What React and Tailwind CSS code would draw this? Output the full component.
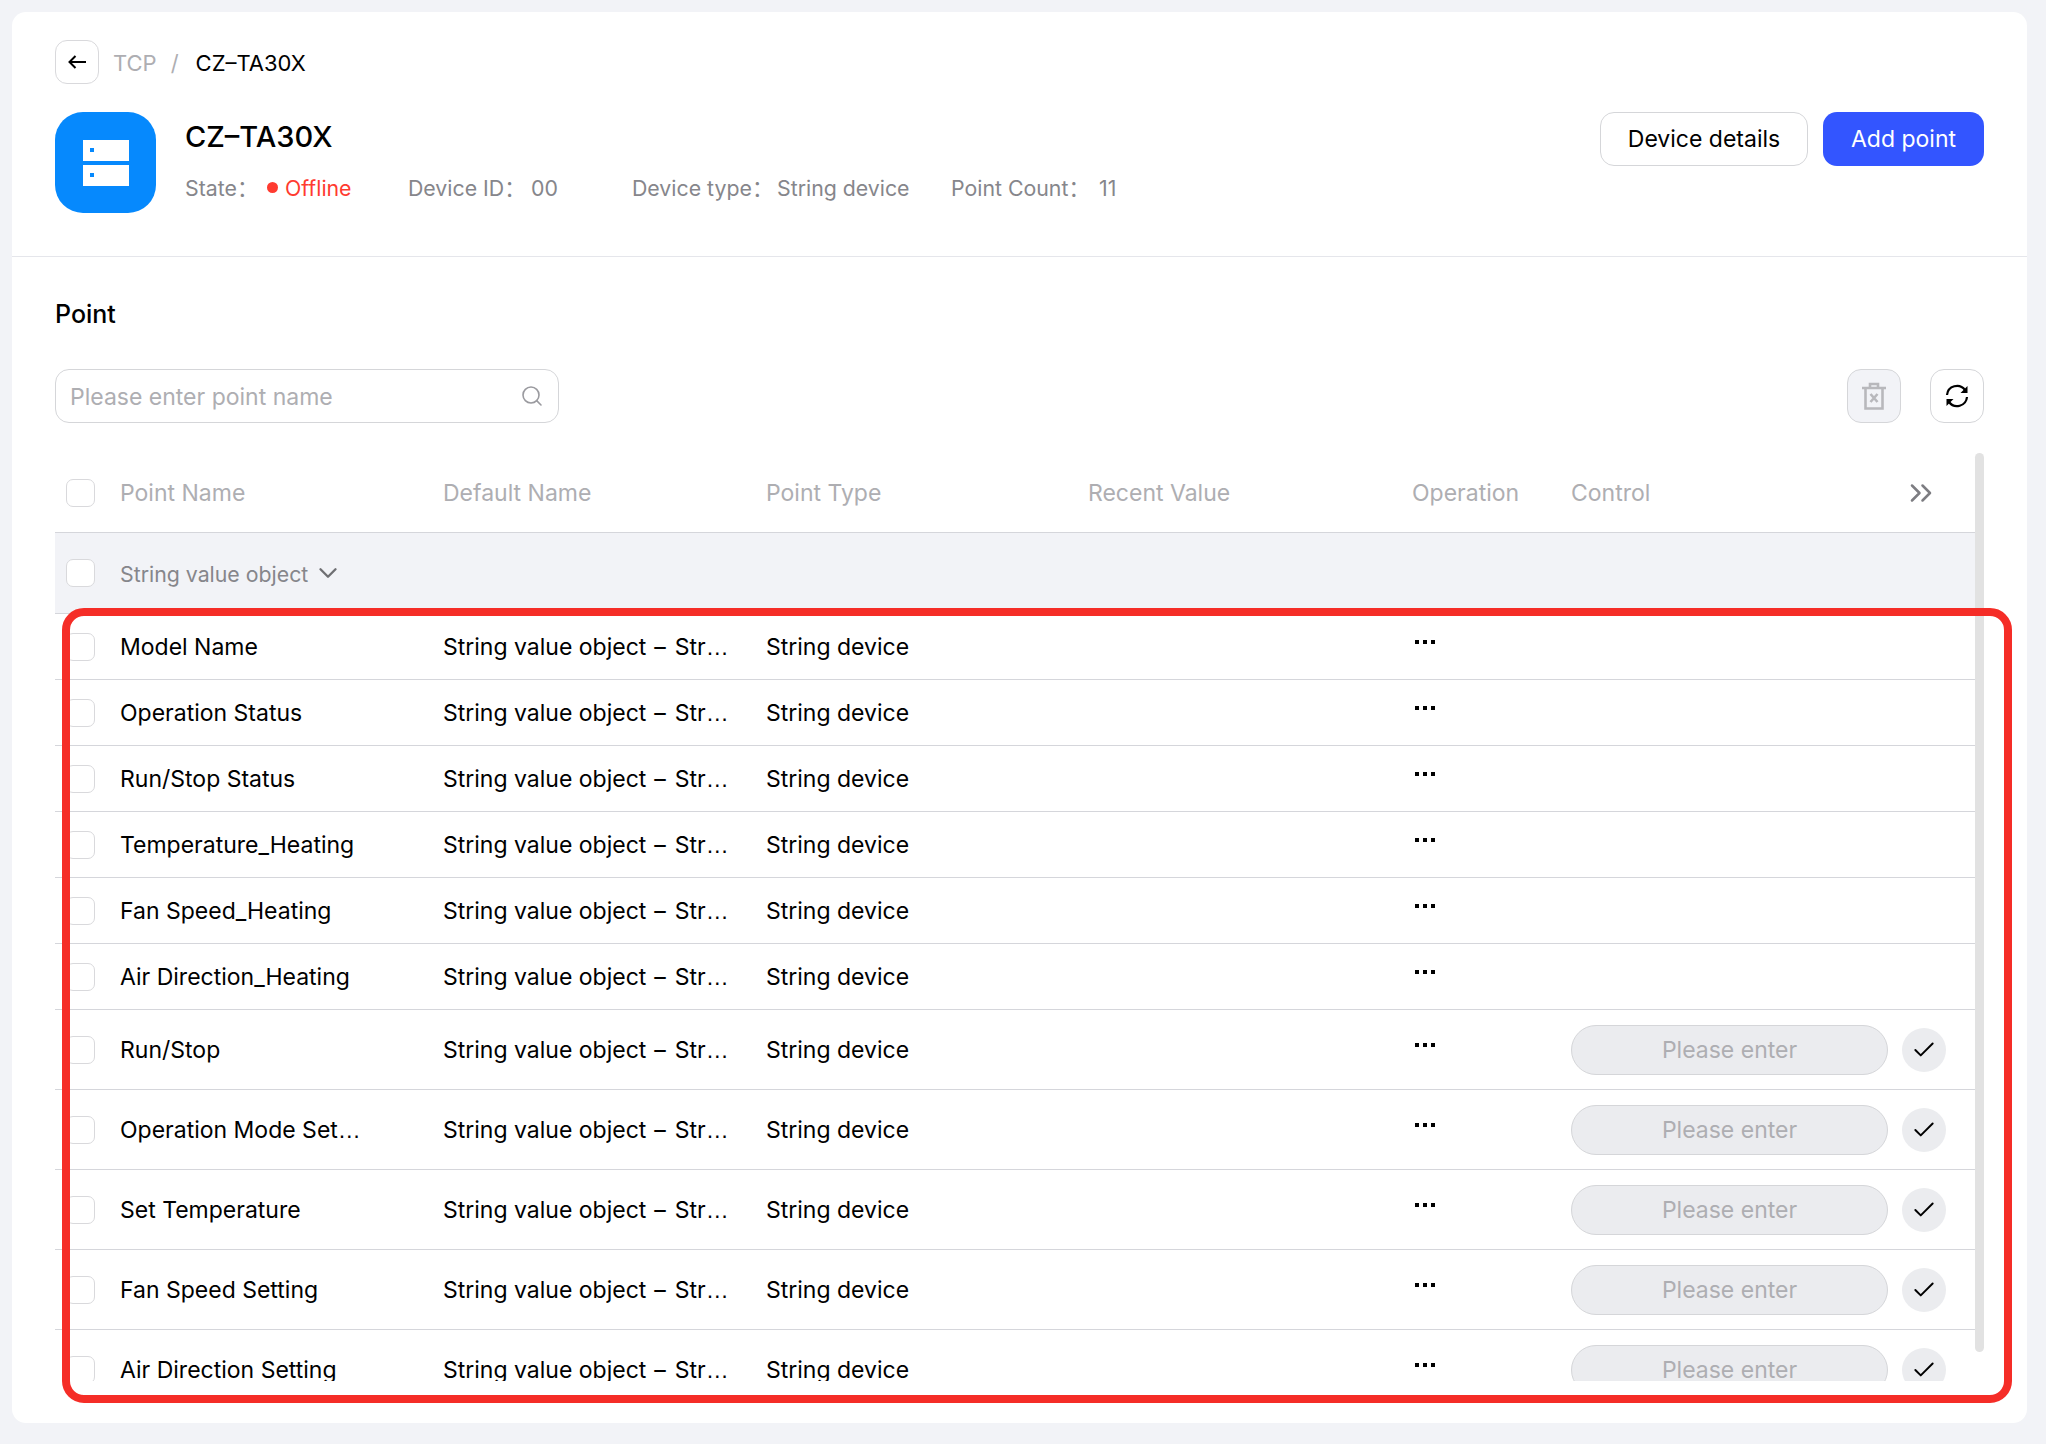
import React from "react";
import { Check, ChevronDown, ChevronsRight, Search } from "lucide-react";

const rows = [
  ["Model Name", false],
  ["Operation Status", false],
  ["Run/Stop Status", false],
  ["Temperature_Heating", false],
  ["Fan Speed_Heating", false],
  ["Air Direction_Heating", false],
  ["Run/Stop", true],
  ["Operation Mode Set", true],
  ["Set Temperature", true],
  ["Fan Speed Setting", true],
  ["Air Direction Setting", true],
];

const TRUNCATED = "Operation Mode Set";

function Box({ className = "" }) {
  return <div className={"w-[29px] h-[28px] rounded-[7px] border border-[#d9d9dc] bg-white shrink-0 " + className} />;
}

function Ellipsis() {
  return <span className="font-['Liberation_Sans',sans-serif]">…</span>;
}

function Colon() {
  return <span className="font-['Noto_Sans_CJK_SC',sans-serif]">：</span>;
}

function Row({ name, control }) {
  return (
    <div className={"grid grid-cols-[65px_323px_323px_322px_324px_159px_1fr] items-center border-b border-[#d5d6db] text-black " + (control ? "h-[80px]" : "h-[66px]")}>
      <div className="pl-[11px]"><Box /></div>
      <div>{name}{name === TRUNCATED && <Ellipsis />}</div>
      <div>String value object<span className="ml-[8px] mr-[9px]">–</span>Str<Ellipsis /></div>
      <div>String device</div>
      <div className="col-start-5" />
      <div className="pl-[3px] h-full flex items-center">
        <div className="flex gap-[4px] -translate-y-[5px]">
          <span className="w-[4px] h-[4px] bg-black" />
          <span className="w-[4px] h-[4px] bg-black" />
          <span className="w-[4px] h-[4px] bg-black" />
        </div>
      </div>
      {control ? (
        <div className="flex items-center">
          <div className="w-[317px] h-[50px] rounded-full bg-[#ebecef] border border-[#d5d6d9] flex items-center justify-center text-[#aeaeb2]">Please enter</div>
          <div className="ml-[14px] w-[44px] h-[44px] rounded-full bg-[#ebecef] flex items-center justify-center">
            <Check size={26} strokeWidth={1.8} className="text-black" />
          </div>
        </div>
      ) : <div />}
    </div>
  );
}

export default function App() {
  return (
    <div className="relative w-[2046px] h-[1444px] bg-[#f2f3f7] pt-[12px] pl-[12px] font-['Inter','Liberation_Sans',sans-serif] text-[23px] leading-[30px] overflow-hidden">
      <div className="w-[2015px] h-[1411px] rounded-[14px] bg-white flex flex-col">
        <div className="h-[245px] border-b border-[#e5e6eb] px-[43px] pt-[28px] shrink-0">
          <div className="flex items-center h-[44px] text-[22px]">
            <div className="w-[44px] h-[44px] rounded-[12px] border border-[#d9d9dc] flex items-center justify-center">
              <svg width="18" height="14" viewBox="0 0 18 14" fill="none" stroke="#000" strokeWidth="2">
                <path d="M18 7H1.5M7.5 1 1.5 7l6 6" />
              </svg>
            </div>
            <span className="ml-[14px] text-[#aeaeb2] translate-y-[1px]">TCP</span>
            <span className="ml-[14px] text-[#aeaeb2] translate-y-[1px]">/</span>
            <span className="ml-[17px] text-black translate-y-[1px]">CZ–TA30X</span>
          </div>
          <div className="flex mt-[28px]">
            <div className="w-[101px] h-[101px] rounded-[28px] bg-[#0689fd] flex items-center justify-center shrink-0">
              <svg width="46" height="46" viewBox="0 0 46 46">
                <rect x="0" y="0" width="46" height="21" fill="#fff" />
                <rect x="0" y="25" width="46" height="21" fill="#fff" />
                <rect x="7" y="8" width="4" height="4" fill="#0689fd" />
                <rect x="7" y="33" width="4" height="4" fill="#0689fd" />
              </svg>
            </div>
            <div className="ml-[29px] flex-1">
              <div className="flex justify-between">
                <div className="text-[29px] leading-[40px] font-medium text-black mt-[5px]">CZ–TA30X</div>
                <div className="flex gap-[15px]">
                  <div className="w-[208px] h-[54px] rounded-[14px] border border-[#d5d6d9] flex items-center justify-center text-black">Device details</div>
                  <div className="w-[161px] h-[54px] rounded-[14px] bg-[#3355ff] flex items-center justify-center text-white">Add point</div>
                </div>
              </div>
              <div className="flex items-center text-[#86868b] text-[21.3px] mt-[6px]">
                <span className="w-[82px]">State<Colon /></span>
                <span className="w-[11px] h-[11px] rounded-full bg-[#ff3b30]" />
                <span className="ml-[7px] w-[123px] text-[#ff3b30]">Offline</span>
                <span className="w-[123px]">Device ID<Colon /></span>
                <span className="w-[101px]">00</span>
                <span className="w-[145px]">Device type<Colon /></span>
                <span className="w-[174px]">String device</span>
                <span className="w-[148px]">Point Count<Colon /></span>
                <span>11</span>
              </div>
            </div>
          </div>
        </div>

        <div className="px-[43px] pt-[41px] flex-1 flex flex-col">
          <div className="text-[25px] leading-[32px] text-black font-medium">Point</div>
          <div className="flex items-center justify-between mt-[39px]">
            <div className="w-[504px] h-[54px] rounded-[14px] border border-[#d5d6d9] flex items-center justify-between pl-[14px] pr-[14px] text-[#aeaeb2]">
              <span className="translate-y-[1px]">Please enter point name</span>
              <Search size={24} strokeWidth={1.6} className="text-[#9a9a9f]" />
            </div>
            <div className="flex gap-[29px]">
              <div className="w-[54px] h-[54px] rounded-[14px] border border-[#d5d6d9] bg-[#f2f3f7] flex items-center justify-center">
                <svg width="24" height="28" viewBox="0 0 24 28" fill="none" stroke="#b8b8bc" strokeWidth="2.6">
                  <path d="M0 6h24M8 6V2h8v4M3.5 6v20.5h17V6M8.5 12l7 8M15.5 12l-7 8" />
                </svg>
              </div>
              <div className="w-[54px] h-[54px] rounded-[14px] border border-[#d5d6d9] flex items-center justify-center">
                <svg width="24" height="24" viewBox="0 0 24 24" fill="none" stroke="#000" strokeWidth="2.2">
                  <path d="M2 11a10 10 0 0 1 18-5M22 13a10 10 0 0 1-18 5" />
                  <path d="M22.5 2v7h-7z" fill="#000" stroke="none" />
                  <path d="M1.5 22v-7h7z" fill="#000" stroke="none" />
                </svg>
              </div>
            </div>
          </div>

          <div className="relative mt-[30px] h-[928px] overflow-hidden">
            <div className="w-[1920px]">
              <div className="grid grid-cols-[65px_323px_323px_322px_324px_159px_1fr] items-center h-[80px] border-b border-[#d5d6db] text-[#aeaeb2]">
                <div className="pl-[11px]"><Box /></div>
                <div>Point Name</div>
                <div>Default Name</div>
                <div>Point Type</div>
                <div>Recent Value</div>
                <div>Operation</div>
                <div>Control</div>
              </div>
              <div className="h-[81px] bg-[#f2f3f7] border-b border-[#d5d6db] flex items-center pl-[11px] text-[#86868b] text-[21.3px]">
                <Box />
                <span className="ml-[25px] translate-y-[1px]">String value object</span>
                <ChevronDown size={30} strokeWidth={1.9} className="ml-[5px] text-[#6f6f73]" />
              </div>
              {rows.map(([n, c]) => <Row key={n} name={n} control={c} />)}
            </div>
            <div className="absolute right-0 top-0 w-[9px] h-[899px] rounded-full bg-[#e2e2e2]" />
            <ChevronsRight size={36} strokeWidth={1.7} className="absolute left-[1848px] top-[22px] text-[#7d7d82]" />
          </div>
        </div>
      </div>
      <div className="absolute left-[62px] top-[608px] w-[1950px] h-[795px] rounded-[22px] border-[8px] border-[#f52d27] pointer-events-none" />
    </div>
  );
}
